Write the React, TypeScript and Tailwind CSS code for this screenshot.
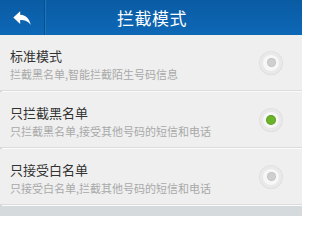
import React from "react";

const rows = [
  { title: "标准模式", sub: "拦截黑名单,智能拦截陌生号码信息", on: false },
  { title: "只拦截黑名单", sub: "只拦截黑名单,接受其他号码的短信和电话", on: true },
  { title: "只接受白名单", sub: "只接受白名单,拦截其他号码的短信和电话", on: false },
];

function Radio({ on }: { on: boolean }) {
  return (
    <div className="w-[22px] h-[22px] rounded-full bg-[#e9e9e9] shadow-[0_0_0_1px_#e0e0e0,0_1px_1px_rgba(0,0,0,0.08)] flex items-center justify-center">
      <div className="w-[16px] h-[16px] rounded-full bg-[#f7f7f7] flex items-center justify-center">
        <div
          className={
            on
              ? "w-[8px] h-[8px] rounded-full bg-[#6cb52a] shadow-[0_0_0_1px_#5a9c20]"
              : "w-[7px] h-[7px] rounded-full bg-[#cfcfcf] shadow-[0_0_0_1px_#c2c2c2]"
          }
        />
      </div>
    </div>
  );
}

export default function App() {
  return (
    <div
      className="w-[302px] h-[216px] bg-[#d5dadd] flex flex-col overflow-hidden"
      style={{ fontFamily: '"Noto Sans CJK SC", "Noto Sans", sans-serif' }}
    >
      <div className="h-[35px] flex bg-gradient-to-b from-[#0a5ba3] to-[#0d68b6] shrink-0">
        <div className="w-[44px] flex items-center justify-center">
          <svg width="22" height="22" viewBox="0 0 24 24" fill="#ffffff">
            <path d="M10 8.5V4.5l-7.5 7 7.5 7v-4.3c5 0 8.5 1.4 11.5 5.3-1-5.5-4.5-10.5-11.5-11z" />
          </svg>
        </div>
        <div className="w-[1px] bg-[#09508f]" />
        <div className="w-[1px] bg-[#1d74bf]" />
        <div className="flex-1 flex items-center justify-center pr-[44px]">
          <span className="text-white text-[17px] leading-none tracking-[0.5px]">拦截模式</span>
        </div>
      </div>
      {rows.map((r) => (
        <div key={r.title} className="shrink-0">
          <div className="h-[55px] bg-[#efefef] flex items-center pl-[10px] pr-[20px]">
            <div className="flex-1 flex flex-col mt-[4px]">
              <div className="text-[13px] leading-[16px] text-[#333333]">{r.title}</div>
              <div className="text-[11px] leading-[14px] text-[#a9a9a9] mt-[3px]">{r.sub}</div>
            </div>
            <Radio on={r.on} />
          </div>
          <div className="h-[1px] bg-[#dcdcdc] ml-[2px]" />
          <div className="h-[1px] bg-[#fbfbfb] ml-[2px]" />
        </div>
      ))}
    </div>
  );
}
